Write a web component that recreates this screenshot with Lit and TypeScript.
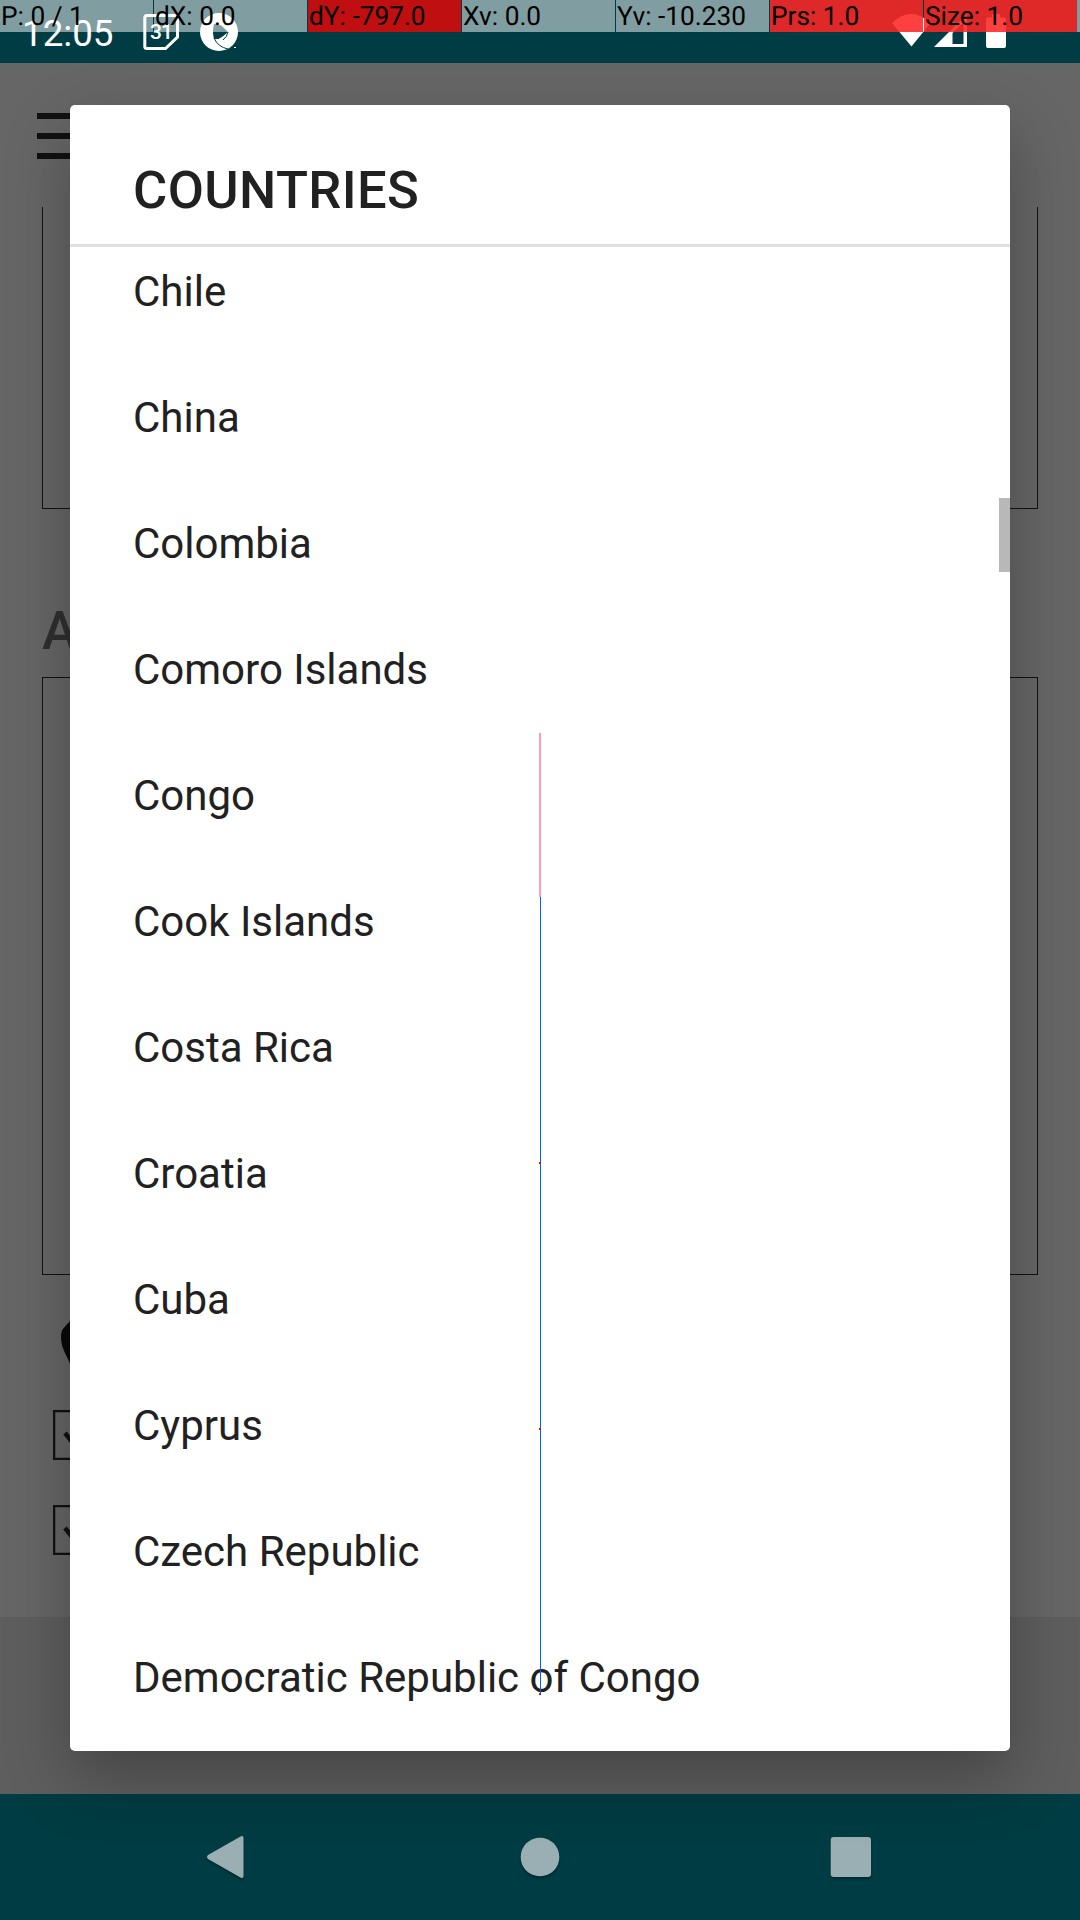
import { LitElement, html, css, svg } from "lit";
import { customElement } from "lit/decorators.js";

const COUNTRIES = [
  "Chile", "China", "Colombia", "Comoro Islands", "Congo", "Cook Islands",
  "Costa Rica", "Croatia", "Cuba", "Cyprus", "Czech Republic",
  "Democratic Republic of Congo",
];

const POINTER_CELLS = [
  { text: "P: 0 / 1", kind: "plain" },
  { text: "dX: 0.0", kind: "plain" },
  { text: "dY: -797.0", kind: "red" },
  { text: "Xv: 0.0", kind: "plain" },
  { text: "Yv: -10.230", kind: "plain" },
  { text: "Prs: 1.0", kind: "mixed" },
  { text: "Size: 1.0", kind: "mixed" },
];

@customElement("status-bar")
export class StatusBar extends LitElement {
  static styles = css`
    :host { display: flex; height: 63px; background: #003c43; color: #fff; box-sizing: border-box; padding: 0 74px 0 22px; align-items: flex-start; }
    .time { font: 400 36.750px/42px Roboto, sans-serif; padding-top: 12.500px; width: 121px; }
    .icon { display: block; margin-top: 12px; }
    .gap { width: 20px; }
    .grow { flex: 1; }
    .day { font: 500 21px Roboto, sans-serif; letter-spacing: -1px; }
  `;
  render() {
    return html`
      <div class="time">12:05</div>
      <svg class="icon" width="37" height="40" viewBox="0 0 37 40">
        <path d="M4 3.500H31.500Q34.500 3.500 34.500 6.500V25L22.500 36.500H4Q1.800 36.500 1.800 34.500V6Q1.800 3.500 4 3.500Z" fill="none" stroke="#fff" stroke-width="3"/>
        <text class="day" x="7" y="26.500" fill="#fff">31</text>
      </svg>
      <div class="gap"></div>
      <svg class="icon" width="40" height="40" viewBox="0 0 40 40">
        <circle cx="19" cy="20" r="19" fill="#fff"/>
        <path d="M14 12Q19 12 22 14L28 20Q24 24 18.500 27H14Q12 20 14 12Z" fill="#003c43"/>
        <path d="M14 26Q18 35 28 37M28 20Q27 25 23 28" fill="none" stroke="#003c43" stroke-width="1"/>
        <path d="M34 35.500h2" stroke="#fff" stroke-width="1"/>
      </svg>
      <div class="grow"></div>
      <svg class="icon" width="114" height="40" viewBox="892 12 114 40">
        <path d="M892 23Q911 5 930.500 23L911.500 46.500Z" fill="#fff"/>
        <path d="M934 47L967 14V47Z" fill="#fff"/>
        <path d="M952.500 33L963.500 22V44H952.500Z" fill="#003c43"/>
        <path d="M988 17.500H992V14H1000V17.500H1004Q1006 17.500 1006 19.500V46Q1006 48 1004 48H988Q986 48 986 46V19.500Q986 17.500 988 17.500Z" fill="#fff"/>
      </svg>
    `;
  }
}

@customElement("pointer-strip")
export class PointerStrip extends LitElement {
  static styles = css`
    :host { display: flex; gap: 1px; height: 32px; }
    .cell { width: 153px; height: 32px; box-sizing: border-box; padding: 1px 0 0 1px; font: 400 26.250px/33px Roboto, sans-serif; text-rendering: geometricPrecision; color: #000; white-space: pre; background: rgba(255, 255, 255, 0.5); }
    .red { background: rgba(255, 0, 0, 0.75); }
    .mixed { background: linear-gradient(rgba(255, 0, 0, 0.75), rgba(255, 0, 0, 0.75)), rgba(255, 255, 255, 0.5); }
    .rest { flex: 1; margin-left: -1px; background: rgba(255, 255, 255, 0.5); }
  `;
  render() {
    return html`${POINTER_CELLS.map((c) => html`<div class="cell ${c.kind}">${c.text}</div>`)}<div class="rest"></div>`;
  }
}

@customElement("form-page")
export class FormPage extends LitElement {
  static styles = css`
    :host { display: flex; flex-direction: column; height: 1731px; background: #666; }
    .top { height: 144px; box-sizing: border-box; padding: 49.700px 0 0 36.500px; display: flex; flex-direction: column; gap: 14.300px; }
    .bar { width: 60px; height: 6px; background: #111; flex: none; }
    .field { margin: 0 42px; border: 1px solid #111; box-sizing: border-box; flex: none; }
    .first { height: 302px; border-top: 0; }
    .second { height: 598px; }
    .label { height: 168px; box-sizing: border-box; padding: 91px 0 0 42px; font: 500 53px/62px Roboto, sans-serif; color: #2f2f2f; flex: none; }
    .options { flex: 1; box-sizing: border-box; padding: 42px 0 0 53px; display: flex; flex-direction: column; }
    .pin { display: block; margin-left: 8px; height: 93px; flex: none; }
    .box { display: block; flex: none; margin-bottom: 45px; }
    .footer { height: 177px; background: #5e5e5e; flex: none; }
  `;
  private check() {
    return svg`<rect x="1" y="1" width="48" height="48" fill="none" stroke="#111" stroke-width="2.500"/>
      <path d="M12 23L20 33L37 14" fill="none" stroke="#111" stroke-width="4.500"/>`;
  }
  render() {
    return html`
      <div class="top"><div class="bar"></div><div class="bar"></div><div class="bar"></div></div>
      <div class="field first"></div>
      <div class="label">A</div>
      <div class="field second"></div>
      <div class="options">
        <svg class="pin" width="40" height="93" viewBox="0 0 40 93">
          <path d="M0 20Q0 14 2 12Q6 7 11 2L30 3V60H16Q9 47 4 36Q0 28 0 20Z" fill="#080808"/>
        </svg>
        <svg class="box" width="50" height="50">${this.check()}</svg>
        <svg class="box" width="50" height="50">${this.check()}</svg>
      </div>
      <div class="footer"></div>
    `;
  }
}

@customElement("nav-bar")
export class NavBar extends LitElement {
  static styles = css`
    :host { display: flex; height: 126px; background: #003c43; }
    .keys { display: block; filter: drop-shadow(0 2px 1px rgba(0, 0, 0, 0.3)); }
  `;
  render() {
    return html`
      <svg class="keys" width="1080" height="126" viewBox="0 1794 1080 126" fill="#99afb3">
        <path d="M208 1855L240.500 1836.500Q243.500 1835 243.500 1838V1876Q243.500 1879 240.500 1877.500L208 1859Q206 1857 208 1855Z"/>
        <circle cx="540" cy="1857" r="19.300"/>
        <rect x="830.700" y="1837" width="40.300" height="40" rx="3"/>
      </svg>
    `;
  }
}

@customElement("country-dialog")
export class CountryDialog extends LitElement {
  static styles = css`
    :host { display: flex; flex-direction: column; background: #fff; border-radius: 5px; overflow: hidden; color: #212121; font-family: Roboto, sans-serif; box-shadow: 0 26px 64px rgba(0, 0, 0, 0.28); }
    .title { height: 139px; box-sizing: border-box; padding: 54px 0 0 63px; font-size: 52.500px; line-height: 62px; letter-spacing: 0.400px; font-weight: 500; flex: none; }
    .list { flex: 1; min-height: 0; overflow: hidden; border-top: 3px solid #e0e0e0; position: relative; }
    .rows { margin-top: -18px; }
    .row { height: 126px; padding-left: 63px; line-height: 126px; font-size: 42px; white-space: nowrap; }
    .thumb { position: absolute; right: 0; top: 251px; width: 11px; height: 74px; background: #b8b8b8; }
  `;
  render() {
    return html`
      <div class="title">COUNTRIES</div>
      <div class="list">
        <div class="rows">${COUNTRIES.map((c) => html`<div class="row">${c}</div>`)}</div>
        <div class="thumb"></div>
      </div>
    `;
  }
}

@customElement("app-root")
export class AppRoot extends LitElement {
  static styles = css`
    :host { display: block; position: relative; width: 1080px; height: 1920px; overflow: hidden; }
    .dialog { position: absolute; left: 70px; top: 105px; width: 940px; height: 1646px; }
    .strip { position: absolute; left: 0; top: 0; width: 1080px; }
    .trace { position: absolute; left: 530px; top: 720px; }
  `;
  render() {
    return html`
      <status-bar></status-bar>
      <form-page></form-page>
      <nav-bar></nav-bar>
      <country-dialog class="dialog"></country-dialog>
      <svg class="trace" width="20" height="990" viewBox="530 720 20 990" shape-rendering="crispEdges">
        <rect x="539" y="733" width="2" height="164" fill="#ff9bb9"/>
        <rect x="540" y="897" width="1" height="796" fill="#0060ff"/>
        ${[1162, 1428, 1693].map((y) => svg`<rect x="539" y=${y} width="2" height="2" fill="#f00"/>`)}
      </svg>
      <pointer-strip class="strip"></pointer-strip>
    `;
  }
}
